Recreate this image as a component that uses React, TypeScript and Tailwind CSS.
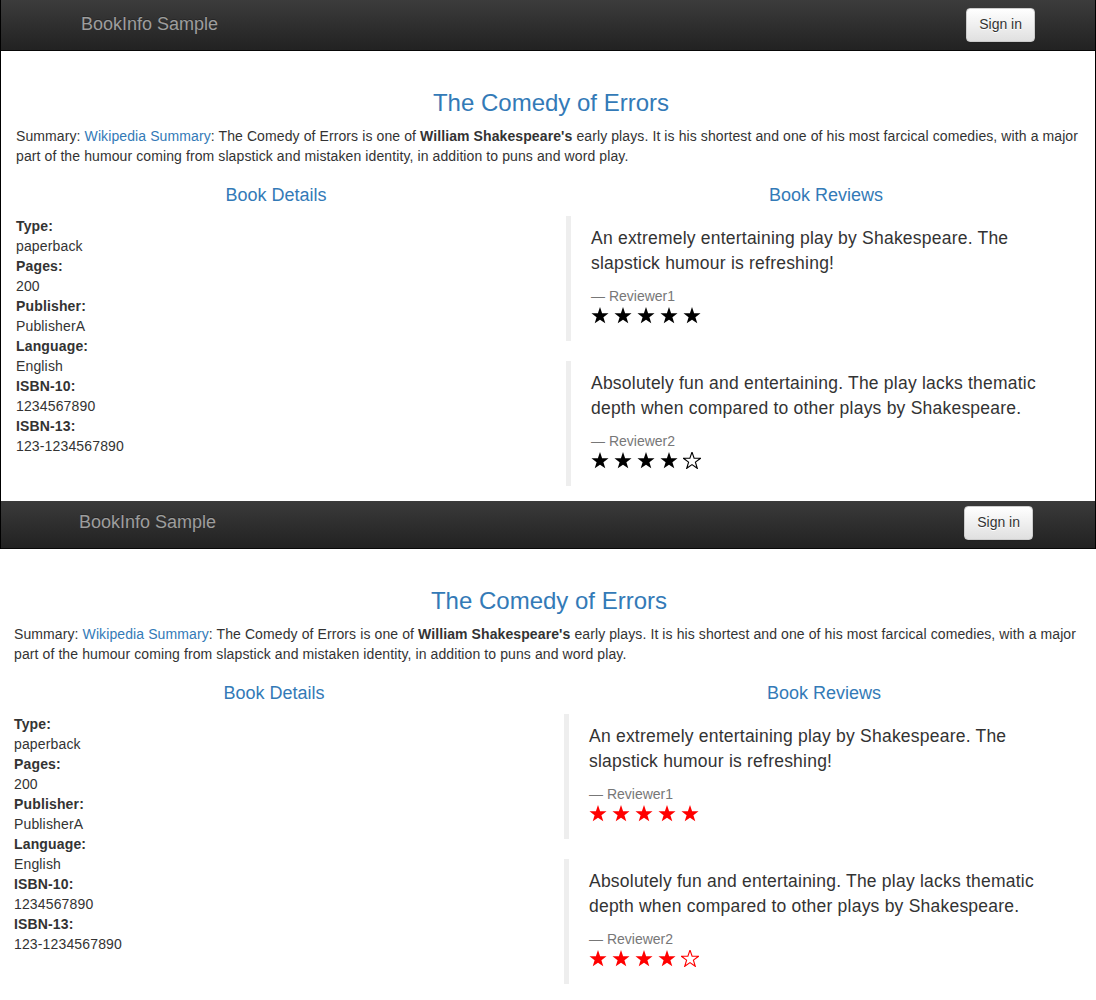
import React from "react";

const STAR_POINTS =
  "9,0.1 11.23,6.53 18.03,6.66 12.61,10.77 14.58,17.29 9,13.4 3.42,17.29 5.39,10.77 -0.03,6.66 6.77,6.53";

function Star({ filled, color }: { filled: boolean; color: string }) {
  return (
    <svg width="18" height="17" viewBox="-0.5 0 19 18" className="block">
      <polygon
        points={STAR_POINTS}
        fill={filled ? color : "none"}
        stroke={color}
        strokeWidth={filled ? 0 : 1.2}
      />
    </svg>
  );
}

function Stars({ count, color }: { count: number; color: string }) {
  return (
    <div className="flex gap-[5px] h-[25px] pt-[1px]">
      {[0, 1, 2, 3, 4].map((i) => (
        <Star key={i} filled={i < count} color={color} />
      ))}
    </div>
  );
}

function Navbar({ second }: { second?: boolean }) {
  return (
    <div
      className={
        second
          ? "h-[51px] border-b border-[#080808] bg-linear-to-b from-[#3c3c3c] to-[#222222] flex items-start justify-between pl-[78px] pr-[62px]"
          : "h-[51px] border-b border-[#080808] bg-linear-to-b from-[#3c3c3c] to-[#222222] flex items-start justify-between pl-[80px] pr-[60px]"
      }
    >
      <div className="pt-[14px] pb-[16px] text-[18px] leading-[20px] text-[#9d9d9d] [text-shadow:0_-1px_0_rgba(0,0,0,0.25)]">
        BookInfo Sample
      </div>
      <button className="mt-[8px] h-[34px] pt-0 pb-[2px] px-[12px] text-[14px] leading-[20px] border border-[#cccccc] rounded-[4px] bg-linear-to-b from-white to-[#e0e0e0] text-[#333] shadow-[0_1px_1px_rgba(0,0,0,0.075)] [text-shadow:0_1px_0_#fff]">
        Sign in
      </button>
    </div>
  );
}

function Review({
  text,
  reviewer,
  stars,
  color,
}: {
  text: string;
  reviewer: string;
  stars: number;
  color: string;
}) {
  return (
    <blockquote className="border-l-[5px] border-[#eeeeee] py-[10px] px-[20px] mb-[20px] text-[17.5px] leading-[25px]">
      <p className="mb-[10px] tracking-[0.22px]">{text}</p>
      <small className="block text-[14px] leading-[20px] text-[#777]">
        {"\u2014\u00a0"}
        {reviewer}
      </small>
      <Stars count={stars} color={color} />
    </blockquote>
  );
}

function Content({ color }: { color: string }) {
  const details: [string, string][] = [
    ["Type:", "paperback"],
    ["Pages:", "200"],
    ["Publisher:", "PublisherA"],
    ["Language:", "English"],
    ["ISBN-10:", "1234567890"],
    ["ISBN-13:", "123-1234567890"],
  ];
  return (
    <div className="w-[1100px] text-[14px] leading-[20px] text-[#333] bg-white">
      <div className="px-[15px] pt-[39px]">
        <h3 className="text-center text-[24px] leading-[26px] text-[#337ab7] mb-[10px]">
          The Comedy of Errors
        </h3>
        <p className="mb-[10px] tracking-[0.1px]">
          Summary: <span className="text-[#337ab7]">Wikipedia Summary</span>: The Comedy of
          Errors is one of <b>William Shakespeare's</b> early plays. It is his shortest and one of
          his most farcical comedies, with a major part of the humour coming from slapstick and
          mistaken identity, in addition to puns and word play.
        </p>
      </div>
      <div className="flex">
        <div className="w-[550px] px-[15px]">
          <h4 className="text-center text-[18px] leading-[20px] text-[#337ab7] mt-[9px] mb-[11px]">
            Book Details
          </h4>
          <dl className="tracking-[0.15px]">
            {details.map(([k, v]) => (
              <React.Fragment key={k}>
                <dt className="font-bold">{k}</dt>
                <dd>{v}</dd>
              </React.Fragment>
            ))}
          </dl>
        </div>
        <div className="w-[550px] px-[15px]">
          <h4 className="text-center text-[18px] leading-[20px] text-[#337ab7] mt-[9px] mb-[11px]">
            Book Reviews
          </h4>
          <Review
            text="An extremely entertaining play by Shakespeare. The slapstick humour is refreshing!"
            reviewer="Reviewer1"
            stars={5}
            color={color}
          />
          <Review
            text="Absolutely fun and entertaining. The play lacks thematic depth when compared to other plays by Shakespeare."
            reviewer="Reviewer2"
            stars={4}
            color={color}
          />
        </div>
      </div>
    </div>
  );
}

export default function App() {
  return (
    <div className="w-[1096px] bg-white font-['Liberation_Sans',Arial,Helvetica,sans-serif]">
      <div className="w-[1096px] border-x border-black overflow-hidden">
        <Navbar />
        <div className="h-[450px] overflow-hidden">
          <Content color="#000000" />
        </div>
        <div className="h-[48px] overflow-hidden">
          <div className="-mt-[3px]">
            <Navbar second />
          </div>
        </div>
      </div>
      <div className="w-[1096px] overflow-hidden">
        <div className="-ml-[1px]">
          <Content color="#ff0000" />
        </div>
      </div>
    </div>
  );
}
